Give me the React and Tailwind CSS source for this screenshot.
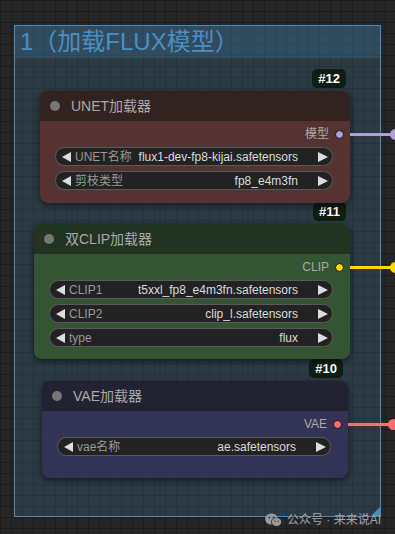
import React from 'react';

const FONT = { fontFamily: '"Liberation Sans", "Noto Sans CJK SC", sans-serif' };

function ArrowL() {
  return (
    <svg width="9" height="10" viewBox="0 0 9 10" className="shrink-0">
      <polygon points="9,0 9,10 0,5" fill="#dddddd" />
    </svg>
  );
}

function ArrowR() {
  return (
    <svg width="10" height="10" viewBox="0 0 10 10" className="shrink-0">
      <polygon points="0,0 0,10 10,5" fill="#dddddd" />
    </svg>
  );
}

function Widget({ label, value }) {
  return (
    <div className="flex h-[19px] items-center rounded-full border border-[#5a5a5a] bg-[#222222] pl-[6px] pr-[4px] text-[12px] leading-[16px]">
      <ArrowL />
      <span className="ml-[4px] text-[#999999]">{label}</span>
      <span className="flex-1 truncate text-right text-[#dddddd]">{value}</span>
      <span className="ml-[20px] flex"><ArrowR /></span>
    </div>
  );
}

function Node({ id, title, output, dot, line, head, body, ml, w, badgeMr, mt, pb, widgets }) {
  return (
    <div className={`flex flex-col ${ml} ${w} ${mt}`}>
      <div className={`self-end ${badgeMr} flex h-[19px] items-center rounded-[5px] bg-[#0f1d12] px-[6px] text-[13px] font-bold text-white`}>
        #{id}
      </div>
      <div className={`relative mt-[3px] rounded-[8px] ${body} shadow-[0_2px_6px_rgba(0,0,0,0.55)]`}>
        <div className={`flex h-[30px] items-center rounded-t-[8px] ${head}`}>
          <div className="ml-[10px] h-[10px] w-[10px] rounded-full bg-[#777777]" />
          <span className="ml-[11px] text-[14px] text-[#aaaaaa]">{title}</span>
        </div>
        <div className={`flex flex-col pl-[15px] pr-[17px] pt-[6px] ${pb}`}>
          <div className="relative flex h-[14px] items-center justify-end -mr-[11px]">
            <span className="text-[12px] text-[#aaaaaa]">{output}</span>
            <div className={`ml-[6px] h-[9px] w-[9px] rounded-full border border-[#111111] ${dot}`} />
          </div>
          <div className="mt-[6px] flex flex-col gap-[5px]">
            {widgets.map((x) => (
              <Widget key={x[0]} label={x[0]} value={x[1]} />
            ))}
          </div>
        </div>
        <div className={`absolute left-full top-[42px] h-[3px] w-[46px] ${line}`}>
          <div className={`absolute -right-[5px] -top-[4px] h-[11px] w-[11px] rounded-full ${line}`} />
        </div>
      </div>
    </div>
  );
}

function WeChat() {
  return (
    <svg width="17" height="14" viewBox="0 0 17 14">
      <ellipse cx="6.5" cy="6" rx="6.5" ry="5.5" fill="#9a9a9a" />
      <ellipse cx="11.5" cy="9" rx="5.5" ry="4.5" fill="#262626" />
      <ellipse cx="11.5" cy="9" rx="4.8" ry="4" fill="#9a9a9a" />
      <circle cx="4.5" cy="4.5" r="0.9" fill="#333" />
      <circle cx="8.5" cy="4.5" r="0.9" fill="#333" />
      <circle cx="10" cy="8.2" r="0.7" fill="#333" />
      <circle cx="13" cy="8.2" r="0.7" fill="#333" />
    </svg>
  );
}

export default function App() {
  return (
    <div
      className="relative h-[534px] w-[395px] overflow-hidden bg-[#262626] bg-[linear-gradient(to_right,#1c1c1c_1px,transparent_1px),linear-gradient(to_bottom,#1c1c1c_1px,transparent_1px)] bg-[size:11px_11px] pt-[25px]"
      style={FONT}
    >
      <div className="relative ml-[14px] flex h-[492px] w-[367px] flex-col border border-[#4a8bbd] bg-[#3f789e]/25">
        <div className="flex h-[32px] shrink-0 items-center bg-[#3f789e]/30 pl-[5px] text-[24px] leading-none text-[#4a8fc4]">
          1（加载FLUX模型）
        </div>
        <div className="flex flex-col pt-[11px]">
          <Node
            id="12"
            title="UNET加载器"
            output="模型"
            dot="bg-[#b39ddb]"
            line="bg-[#b39ddb]"
            head="bg-[#332222]"
            body="bg-[#553333]"
            ml="ml-[25px]"
            w="w-[310px]"
            badgeMr="mr-[4px]"
            mt="mt-0"
            pb="pb-[13px]"
            widgets={[
              ['UNET名称', 'flux1-dev-fp8-kijai.safetensors'],
              ['剪枝类型', 'fp8_e4m3fn'],
            ]}
          />
          <Node
            id="11"
            title="双CLIP加载器"
            output="CLIP"
            dot="bg-[#ffd500]"
            line="bg-[#ffd500]"
            head="bg-[#223322]"
            body="bg-[#335533]"
            ml="ml-[19px]"
            w="w-[316px]"
            badgeMr="mr-[4px]"
            mt="-mt-px"
            pb="pb-[12px]"
            widgets={[
              ['CLIP1', 't5xxl_fp8_e4m3fn.safetensors'],
              ['CLIP2', 'clip_l.safetensors'],
              ['type', 'flux'],
            ]}
          />
          <Node
            id="10"
            title="VAE加载器"
            output="VAE"
            dot="bg-[#ff6e6e]"
            line="bg-[#ff6e6e]"
            head="bg-[#222233]"
            body="bg-[#333355]"
            ml="ml-[27px]"
            w="w-[306px]"
            badgeMr="mr-[5px]"
            mt="mt-0"
            pb="pb-[22px]"
            widgets={[['vae名称', 'ae.safetensors']]}
          />
        </div>
        <svg className="absolute bottom-0 right-0" width="9" height="9" viewBox="0 0 9 9">
          <polygon points="9,0 9,9 0,9" fill="#4a8bbd" />
        </svg>
      </div>
      <div className="absolute left-[265px] top-[511px] flex items-center gap-[5px] text-[12px] text-[#a5a5a5]">
        <WeChat />
        <span>公众号 · 来来说AI</span>
      </div>
    </div>
  );
}
